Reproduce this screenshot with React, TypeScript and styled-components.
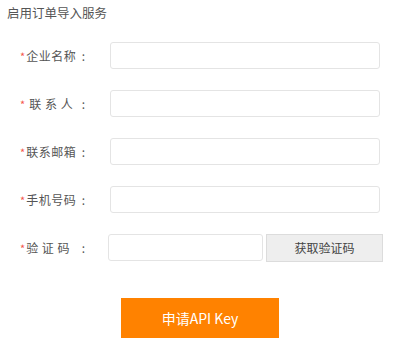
import styled, {createGlobalStyle} from "styled-components";

const GlobalStyle = createGlobalStyle`
    html, body {
        margin: 0;
        padding: 0;
        background: #fff;
    }
    body {
        font-family: "Microsoft YaHei", "Noto Sans CJK SC", "Noto Sans", sans-serif;
        color: #555;
    }
`;

const fields = [
    {label: "企业名称", placeholder: ""},
    {label: "\u00a0联 系 人", placeholder: ""},
    {label: "联系邮箱", placeholder: ""},
    {label: "手机号码", placeholder: ""},
];

export default function App() {
    return (
        <>
            <GlobalStyle/>
            <Page>
                <Title>启用订单导入服务</Title>
                <Form>
                    {fields.map((f) => (
                        <Row key={f.label}>
                            <Label>
                                <Star>*</Star>
                                <LabelText>{f.label}</LabelText>
                                <Colon>:</Colon>
                            </Label>
                            <Input $offset={23}/>
                        </Row>
                    ))}
                    <Row>
                        <Label>
                            <Star>*</Star>
                            <LabelText>验 证 码</LabelText>
                            <Colon>:</Colon>
                        </Label>
                        <Input $offset={21} $width={155}/>
                        <CodeButton type="button">获取验证码</CodeButton>
                    </Row>
                </Form>
                <SubmitWrap>
                    <SubmitButton type="button">申请API Key</SubmitButton>
                </SubmitWrap>
            </Page>
        </>
    );
}

const Page = styled.div`
    width: 397px;
    height: 354px;
    box-sizing: border-box;
    padding: 0 0 0 7px;
`;

const Title = styled.div`
    font-size: 12.5px;
    line-height: 26px;
    color: #555;
`;

const Form = styled.div`
    margin-top: 16px;
    display: flex;
    flex-direction: column;
    gap: 21px;
`;

const Row = styled.div`
    display: flex;
    align-items: center;
    height: 27px;
`;

const Label = styled.div`
    width: 67px;
    margin-left: 13px;
    display: flex;
    align-items: center;
    font-size: 12px;
    color: #555;
    white-space: pre;
`;

const Star = styled.span`
    color: #f5574d;
    margin-right: 1px;
    font-size: 11px;
`;

const LabelText = styled.span`
    letter-spacing: 0.5px;
`;

const Colon = styled.span`
    margin-left: auto;
    padding-right: 2px;
`;

const Input = styled.input<{ $offset: number; $width?: number }>`
    box-sizing: border-box;
    margin-left: ${(p) => p.$offset}px;
    width: ${(p) => p.$width ?? 270}px;
    height: 27px;
    border: 1px solid #e4e4e4;
    border-radius: 3px;
    background: #fff;
    outline: none;
    padding: 0 8px;
`;

const CodeButton = styled.button`
    box-sizing: border-box;
    margin-left: 3px;
    width: 117px;
    height: 28px;
    border: 1px solid #dcdcdc;
    background: #eeeeee;
    color: #444;
    font-family: inherit;
    font-size: 12px;
    padding: 0;
    cursor: pointer;
`;

const SubmitWrap = styled.div`
    margin-top: 37px;
    padding-left: 114px;
`;

const SubmitButton = styled.button`
    width: 158px;
    height: 40px;
    border: none;
    background: #ff8200;
    color: #fff;
    font-family: inherit;
    font-size: 14px;
    padding: 0;
    cursor: pointer;
`;
